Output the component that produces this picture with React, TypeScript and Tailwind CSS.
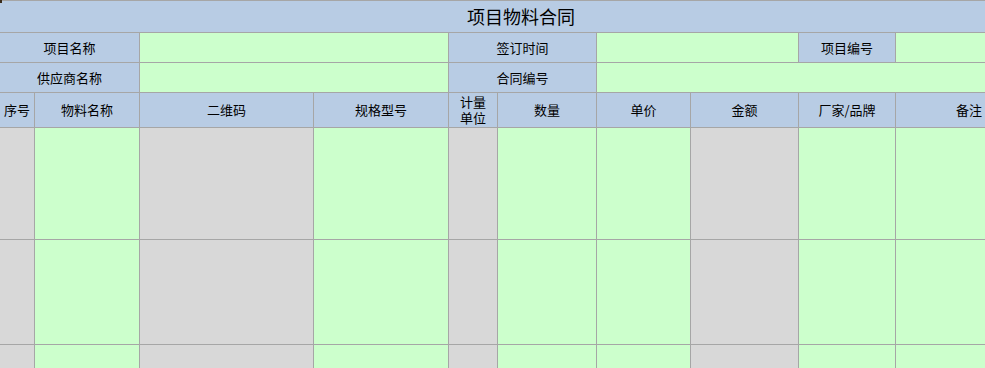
import React from "react";

const blue = "bg-[#b8cce4]";
const green = "bg-[#ccffcc]";
const gray = "bg-[#d8d8d8]";

function Cell({
  className = "",
  children,
}: {
  className?: string;
  children?: React.ReactNode;
}) {
  return (
    <div className={`flex items-center justify-center text-center text-black ${className}`}>
      {children}
    </div>
  );
}

const dataColors = [gray, green, gray, green, gray, green, green, gray, green, green];

export default function App() {
  const headers: React.ReactNode[] = [
    "序号",
    "物料名称",
    "二维码",
    "规格型号",
    <div key="u" className="flex flex-col">
      <div className="h-[16px] leading-[16px]">计量</div>
      <div className="h-[16px] leading-[16px]">单位</div>
    </div>,
    "数量",
    "单价",
    "金额",
    "厂家/品牌",
    "备注",
  ];

  return (
    <div
      className="relative w-[985px] h-[368px] overflow-hidden bg-white"
      style={{ fontFamily: '"Noto Sans CJK SC", "Noto Sans", sans-serif' }}
    >
      <div className="absolute left-0 top-0 w-[2px] h-[3px] bg-[#3a2c1c]" />
      <div className="grid w-max gap-px bg-[#a6a6a6] pt-px text-[13px] grid-cols-[34px_104px_173px_134px_48px_98px_93px_107px_96px_146px] grid-rows-[31px_29px_29px_34px_111px_104px_60px]">
        <Cell className={`${blue} col-span-10 text-[18px]`}>项目物料合同</Cell>

        <Cell className={`${blue} col-span-2`}>项目名称</Cell>
        <Cell className={`${green} col-span-2`} />
        <Cell className={`${blue} col-span-2`}>签订时间</Cell>
        <Cell className={`${green} col-span-2`} />
        <Cell className={blue}>项目编号</Cell>
        <Cell className={green} />

        <Cell className={`${blue} col-span-2`}>供应商名称</Cell>
        <Cell className={`${green} col-span-2`} />
        <Cell className={`${blue} col-span-2`}>合同编号</Cell>
        <Cell className={`${green} col-span-4`} />

        {headers.map((h, i) => (
          <Cell key={`h${i}`} className={blue}>
            {h}
          </Cell>
        ))}

        {[0, 1, 2].map((r) =>
          dataColors.map((c, i) => <Cell key={`d${r}-${i}`} className={c} />)
        )}
      </div>
    </div>
  );
}
